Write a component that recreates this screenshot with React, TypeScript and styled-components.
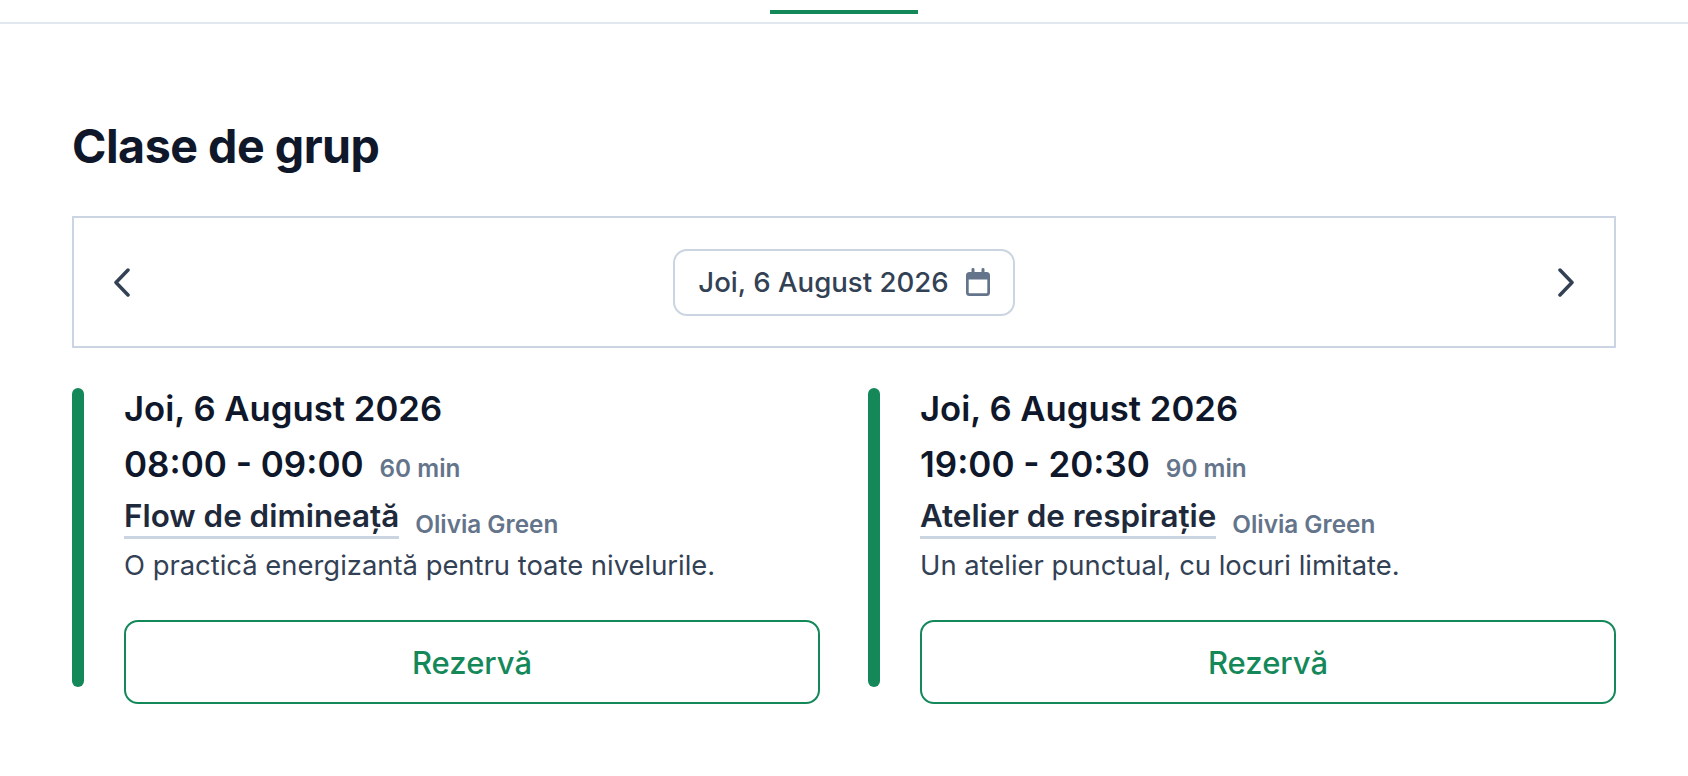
import { createGlobalStyle, styled } from 'styled-components';

const GREEN = '#15885a';

const GlobalStyle = createGlobalStyle`
  * {
    box-sizing: border-box;
  }

  body {
    margin: 0;
    background: #fff;
    font-family: Inter, 'Liberation Sans', sans-serif;
    color: #0f172a;
  }
`;

const TopBar = styled.div`
  display: flex;
  justify-content: center;
  height: 24px;
  padding-top: 10px;
  border-bottom: 2px solid #e2e8f0;
`;

const ActiveTab = styled.div`
  width: 148px;
  height: 4px;
  background: ${GREEN};
`;

const Section = styled.main`
  padding: 0 72px;
`;

const Title = styled.h1`
  margin: 0;
  padding-top: 86px;
  height: 192px;
  font-size: 46.6px;
  line-height: 72px;
  font-weight: 700;
  letter-spacing: -0.5px;
`;

const DateBar = styled.div`
  display: flex;
  align-items: center;
  justify-content: space-between;
  height: 132px;
  padding: 0 40px;
  border: 2px solid #cbd5e1;
`;

const ArrowButton = styled.button`
  display: flex;
  padding: 0;
  border: 0;
  background: none;
  color: #334155;
`;

const DatePill = styled.button`
  display: flex;
  align-items: center;
  gap: 17px;
  height: 67px;
  padding: 0 23px;
  border: 2px solid #cbd5e1;
  border-radius: 14px;
  background: #fff;
  color: #334155;
  font-family: inherit;
  font-size: 27.6px;
  font-weight: 500;
`;

const Grid = styled.div`
  display: grid;
  grid-template-columns: 1fr 1fr;
  gap: 48px;
  margin-top: 40px;
`;

const Card = styled.article`
  display: grid;
  grid-template-columns: 12px 1fr;
  column-gap: 40px;
`;

const Bar = styled.div`
  height: 299px;
  border-radius: 6px;
  background: ${GREEN};
`;

const Body = styled.div`
  display: flex;
  flex-direction: column;
`;

const DateLine = styled.div`
  font-size: 34.7px;
  line-height: 40px;
  font-weight: 600;
`;

const TimeRow = styled.div`
  display: flex;
  align-items: baseline;
  gap: 16px;
  margin-top: 12px;
`;

const Time = styled.span`
  font-size: 35px;
  line-height: 48px;
  font-weight: 600;
`;

const Duration = styled.span`
  color: #64748b;
  font-size: 24.3px;
  font-weight: 600;
`;

const ClassRow = styled.div`
  display: flex;
  align-items: flex-end;
  gap: 16px;
  margin-top: 9px;
`;

const ClassName = styled.span`
  color: #1e293b;
  font-size: 31.4px;
  line-height: 39px;
  font-weight: 600;
  border-bottom: 3px solid #cbd5e1;
`;

const Teacher = styled.span`
  color: #64748b;
  font-size: 24.3px;
  line-height: 30px;
  font-weight: 600;
`;

const Description = styled.p`
  margin: 8px 0 0;
  color: #334155;
  font-size: 27.4px;
  line-height: 36px;
`;

const BookButton = styled.button`
  height: 84px;
  margin-top: 37px;
  border: 2px solid ${GREEN};
  border-radius: 14px;
  background: #fff;
  color: ${GREEN};
  font-family: inherit;
  font-size: 31px;
  font-weight: 500;
`;

function ChevronIcon({ flip }: { flip?: boolean }) {
  return (
    <svg width="16" height="29" viewBox="0 0 16 29" fill="none" stroke="currentColor" strokeWidth="3.5" strokeLinecap="round" strokeLinejoin="round">
      <path d={flip ? 'M2 2L14 14.5L2 27' : 'M14 2L2 14.5L14 27'} />
    </svg>
  );
}

function CalendarIcon() {
  return (
    <svg width="24" height="28" viewBox="0 0 24 28" fill="#64748b">
      <path d="M5.5 1.2a1.5 1.2 0 0 1 3 0V5h-3zM15.5 1.2a1.5 1.2 0 0 1 3 0V5h-3z" />
      <path fillRule="evenodd" d="M3.5 4h17A3.5 3.5 0 0 1 24 7.5v17a3.5 3.5 0 0 1-3.5 3.5h-17A3.5 3.5 0 0 1 0 24.500v-17A3.5 3.5 0 0 1 3.500 4zM2.700 11.500v13a.8.8 0 0 0 .8.8h17a.8.8 0 0 0 .8-.8v-13z" />
    </svg>
  );
}

const classes = [
  {
    time: '08:00 - 09:00',
    duration: '60 min',
    name: 'Flow de dimineață',
    description: 'O practică energizantă pentru toate nivelurile.',
  },
  {
    time: '19:00 - 20:30',
    duration: '90 min',
    name: 'Atelier de respirație',
    description: 'Un atelier punctual, cu locuri limitate.',
  },
];

export default function App() {
  return (
    <>
      <GlobalStyle />
      <TopBar>
        <ActiveTab />
      </TopBar>
      <Section>
        <Title>Clase de grup</Title>
        <DateBar>
          <ArrowButton>
            <ChevronIcon />
          </ArrowButton>
          <DatePill>
            Joi, 6 August 2026
            <CalendarIcon />
          </DatePill>
          <ArrowButton>
            <ChevronIcon flip />
          </ArrowButton>
        </DateBar>
        <Grid>
          {classes.map((item) => (
            <Card key={item.time}>
              <Bar />
              <Body>
                <DateLine>Joi, 6 August 2026</DateLine>
                <TimeRow>
                  <Time>{item.time}</Time>
                  <Duration>{item.duration}</Duration>
                </TimeRow>
                <ClassRow>
                  <ClassName>{item.name}</ClassName>
                  <Teacher>Olivia Green</Teacher>
                </ClassRow>
                <Description>{item.description}</Description>
                <BookButton>Rezervă</BookButton>
              </Body>
            </Card>
          ))}
        </Grid>
      </Section>
    </>
  );
}
